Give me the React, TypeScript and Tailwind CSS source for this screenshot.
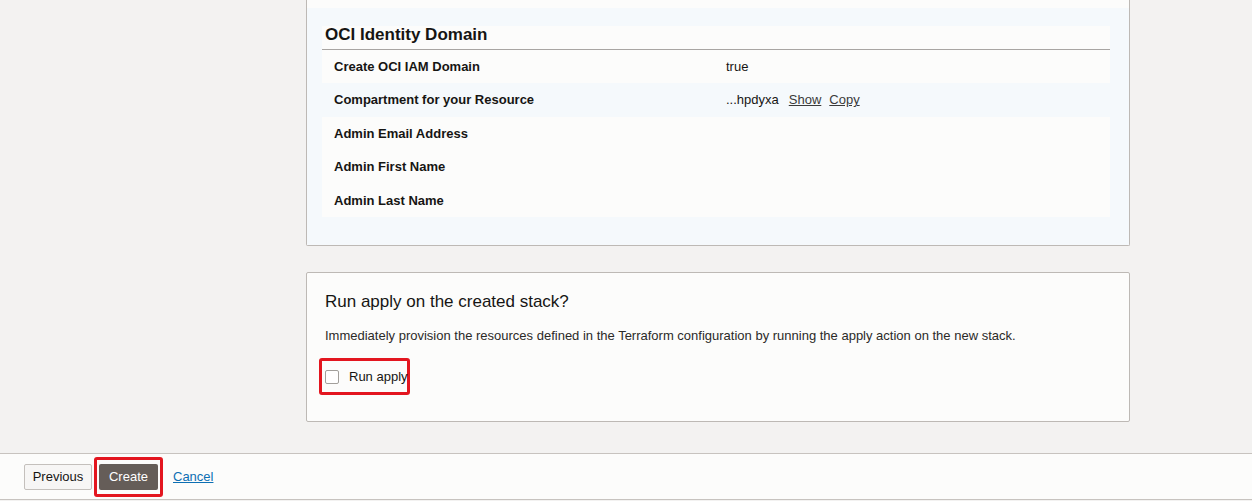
import { useState } from 'react';

const rows = [
  { label: "Create OCI IAM Domain", value: "true", tone: "white" },
  { label: "Compartment for your Resource", value: "ocid", tone: "blue" },
  { label: "Admin Email Address", value: "", tone: "white" },
  { label: "Admin First Name", value: "", tone: "white" },
  { label: "Admin Last Name", value: "", tone: "white" },
];

export default function App() {
  const [runApply, setRunApply] = useState(false);

  return (
    <div className="w-full h-[501px] overflow-hidden bg-[#f3f2f1] text-[#161513] flex flex-col" style={{ fontFamily: '"Liberation Sans", Arial, sans-serif' }}>
      <main className="pl-[306px] flex flex-col">
        {/* Review section (scrolled, top cut off) */}
        <section className="w-[824px] border-x border-b border-[#bdb9b5] rounded-b-[2px] bg-[#fcfcfb]">
          <div className="h-2 bg-[#fcfcfb]"></div>
          <div className="bg-[#f5f9fc] pl-[15px] pr-[19px] pt-[18px] pb-[28px]">
            <div className="bg-[#fcfcfb]">
              <h3 className="h-[24px] border-b border-[#a8a5a2] pl-[3px] text-[17px] font-bold leading-[18px]">OCI Identity Domain</h3>
              {rows.map((row, i) => (
                <div
                  key={row.label}
                  className={`flex items-center text-[13px] ${i % 2 === 1 ? 'h-[34px]' : 'h-[33px]'} ${row.tone === 'blue' ? 'bg-[#f5f9fc]' : 'bg-[#fcfcfb]'}`}
                >
                  <div className="w-[404px] pl-[12px] font-bold">{row.label}</div>
                  <div className="flex items-center gap-2">
                    {row.value === 'ocid' ? (
                      <>
                        <span>...hpdyxa</span>
                        <a className="underline text-[#3a3a3a] ml-[2px]">Show</a>
                        <a className="underline text-[#3a3a3a]">Copy</a>
                      </>
                    ) : (
                      <span>{row.value}</span>
                    )}
                  </div>
                </div>
              ))}
            </div>
          </div>
        </section>

        {/* Run apply section */}
        <section className="mt-[26px] w-[824px] h-[150px] border border-[#bdb9b5] rounded-[2px] bg-[#fcfcfb] pl-[18px] pt-[19px]">
          <h2 className="text-[17px] leading-[20px]">Run apply on the created stack?</h2>
          <p className="mt-[16px] text-[13px] leading-[16px] text-[#2b2a28]">
            Immediately provision the resources defined in the Terraform configuration by running the apply action on the new stack.
          </p>
          <label className="mt-[14px] -ml-[6px] w-[91px] h-[37px] border-[3px] border-[#e3161f] rounded-[3px] flex items-center pl-[3px] cursor-pointer whitespace-nowrap">
            <input
              type="checkbox"
              checked={runApply}
              onChange={() => setRunApply(!runApply)}
              className="appearance-none shrink-0 w-[14px] h-[14px] border border-[#a29f9b] rounded-[2px] bg-white"
            />
            <span className="ml-[10px] text-[13px]">Run apply</span>
          </label>
        </section>
      </main>

      {/* Footer buttons */}
      <footer className="mt-[31px] h-[47px] border-y border-[#c7c3bf] bg-[#fcfcfb] flex items-center pl-[24px]">
        <button className="h-[26px] w-[68px] border border-[#c4c0bc] rounded-[2px] bg-[#f7f6f5] text-[13px] text-[#161513]">Previous</button>
        <div className="ml-[2px] w-[69px] h-[40px] border-[3px] border-[#e3161f] rounded-[3px] flex items-center justify-center">
          <button className="h-[26px] w-[59px] rounded-[2px] bg-[#655d58] text-[13px] text-white">Create</button>
        </div>
        <a className="ml-[10px] text-[13px] text-[#0d6fb3] underline">Cancel</a>
      </footer>
    </div>
  );
}
